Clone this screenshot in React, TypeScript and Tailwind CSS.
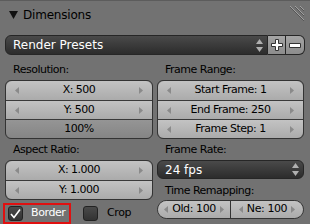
import React from "react"

const font = { fontFamily: '"DejaVu Sans", "Liberation Sans", sans-serif' }

function Arrow({ dir }: { dir: "l" | "r" }) {
  return (
    <svg width="5" height="7" viewBox="0 0 5 7" className="shrink-0">
      {dir === "l" ? <path d="M4 0 L0 3.5 L4 7 Z" fill="#8a8a8a" /> : <path d="M1 0 L5 3.5 L1 7 Z" fill="#8a8a8a" />}
    </svg>
  )
}

function NumRow({ text, first, last }: { text: string; first?: boolean; last?: boolean }) {
  return (
    <div
      className={`flex h-[19px] items-center justify-between bg-gradient-to-b from-[#c3c3c3] to-[#ababab] px-[9px] text-[11px] tracking-[-0.5px] text-black ${first ? "" : "border-t border-[#3a3a3a]"} ${first ? "rounded-t-[6px]" : ""} ${last ? "rounded-b-[6px]" : ""}`}
    >
      <Arrow dir="l" />
      <span>{text}</span>
      <Arrow dir="r" />
    </div>
  )
}

function Label({ text }: { text: string }) {
  return <div className="h-[20px] pl-[8px] text-[11px] leading-[20px] tracking-[-0.5px] text-black">{text}</div>
}

function UpDown() {
  return (
    <svg width="7" height="13" viewBox="0 0 7 13">
      <path d="M3.5 0 L7 5 L0 5 Z" fill="#b0b0b0" />
      <path d="M0 8 L7 8 L3.5 13 Z" fill="#b0b0b0" />
    </svg>
  )
}

export default function App() {
  return (
    <div style={font} className="h-[224px] w-[310px] overflow-hidden border-t border-[#5c5c5c] bg-[#727272]">
      <div className="flex h-[25px] items-center justify-between pl-[9px] pr-[5px]">
        <div className="flex items-center gap-[5px] pt-[3px]">
          <svg width="9" height="8" viewBox="0 0 9 8">
            <path d="M0 0 L9 0 L4.5 8 Z" fill="#111" />
          </svg>
          <span className="text-[12px] tracking-[-0.2px] text-black">Dimensions</span>
        </div>
        <svg width="17" height="19" viewBox="0 0 17 19" className="mt-[3px]">
          <path d="M2 0 L16 14 M7 0 L16 9 M12 0 L16 4" stroke="#a0a0a0" strokeWidth="1" />
          <path d="M2 1 L16 15 M7 1 L16 10 M12 1 L16 5" stroke="#555" strokeWidth="1" />
        </svg>
      </div>

      <div className="mx-[5px] mt-[9px] flex h-[20px]">
        <div className="flex flex-1 items-center justify-between rounded-l-[6px] border border-[#262626] bg-gradient-to-b from-[#4a4a4a] to-[#2c2c2c] pl-[7px] pr-[4px] text-[12px] text-white">
          <span>Render Presets</span>
          <UpDown />
        </div>
        <div className="flex w-[18px] items-center justify-center border-y border-r border-[#262626] bg-gradient-to-b from-[#a5a5a5] to-[#8c8c8c]">
          <svg width="12" height="12" viewBox="0 0 12 12">
            <path d="M4.5 0.5 H7.5 V4.5 H11.5 V7.5 H7.5 V11.5 H4.5 V7.5 H0.5 V4.5 H4.5 Z" fill="#fff" stroke="#333" strokeWidth="1" />
          </svg>
        </div>
        <div className="flex w-[19px] items-center justify-center rounded-r-[6px] border-y border-r border-[#262626] bg-gradient-to-b from-[#a5a5a5] to-[#8c8c8c]">
          <svg width="12" height="5" viewBox="0 0 12 5">
            <path d="M0.5 0.5 H11.5 V4.5 H0.5 Z" fill="#fff" stroke="#333" strokeWidth="1" />
          </svg>
        </div>
      </div>

      <div className="mx-[5px] mt-[5px] flex gap-[4px]">
        <div className="flex w-[148px] flex-col">
          <Label text="Resolution:" />
          <div className="rounded-[6px] border border-[#333]">
            <NumRow text="X: 500" first />
            <NumRow text="Y: 500" />
            <div className="flex h-[19px] items-center justify-center rounded-b-[6px] border-t border-[#3a3a3a] bg-gradient-to-b from-[#959595] to-[#858585] text-[11px] tracking-[-0.5px] text-black">
              100%
            </div>
          </div>
          <div className="mt-[1px]" />
          <Label text="Aspect Ratio:" />
          <div className="rounded-[6px] border border-[#333]">
            <NumRow text="X: 1.000" first />
            <NumRow text="Y: 1.000" last />
          </div>
          <div className="mt-[3px] flex items-center">
            <div className="flex h-[21px] w-[68px] -ml-[2px] items-center border-2 border-[#e01010] pl-[3px]">
              <div className="flex h-[15px] w-[15px] items-center justify-center rounded-[3px] border border-[#222] bg-gradient-to-b from-[#4a4a4a] to-[#333]">
                <svg width="11" height="10" viewBox="0 0 11 10">
                  <path d="M1 5 L4 8.5 L10 0.5" stroke="#fff" strokeWidth="1.6" fill="none" />
                </svg>
              </div>
              <span className="ml-[8px] text-[11px] tracking-[-0.4px] text-white">Border</span>
            </div>
            <div className="ml-[12px] h-[15px] w-[15px] rounded-[3px] border border-[#222] bg-gradient-to-b from-[#4a4a4a] to-[#333]" />
            <span className="ml-[9px] text-[11px] tracking-[-0.4px] text-black">Crop</span>
          </div>
        </div>

        <div className="flex w-[147px] flex-col">
          <Label text="Frame Range:" />
          <div className="rounded-[6px] border border-[#333]">
            <NumRow text="Start Frame: 1" first />
            <NumRow text="End Frame: 250" />
            <NumRow text="Frame Step: 1" last />
          </div>
          <div className="mt-[1px]" />
          <Label text="Frame Rate:" />
          <div className="flex h-[19px] items-center justify-between rounded-[6px] border border-[#262626] bg-gradient-to-b from-[#4a4a4a] to-[#2c2c2c] pl-[7px] pr-[4px] text-[12px] text-white">
            <span>24 fps</span>
            <UpDown />
          </div>
          <div className="h-[21px] pl-[8px] pt-[2px] text-[11px] leading-[20px] tracking-[-0.5px] text-black">Time Remapping:</div>
          <div className="flex h-[19px] rounded-full border border-[#333]">
            <div className="flex flex-1 items-center justify-center gap-[3px] rounded-l-full bg-gradient-to-b from-[#c3c3c3] to-[#ababab] text-[11px] tracking-[-0.4px] text-black">
              <Arrow dir="l" />
              <span>Old: 100</span>
              <Arrow dir="r" />
            </div>
            <div className="flex flex-1 items-center justify-center gap-[3px] rounded-r-full border-l border-[#333] bg-gradient-to-b from-[#c3c3c3] to-[#ababab] text-[11px] tracking-[-0.4px] text-black">
              <Arrow dir="l" />
              <span>Ne: 100</span>
              <Arrow dir="r" />
            </div>
          </div>
        </div>
      </div>
    </div>
  )
}
